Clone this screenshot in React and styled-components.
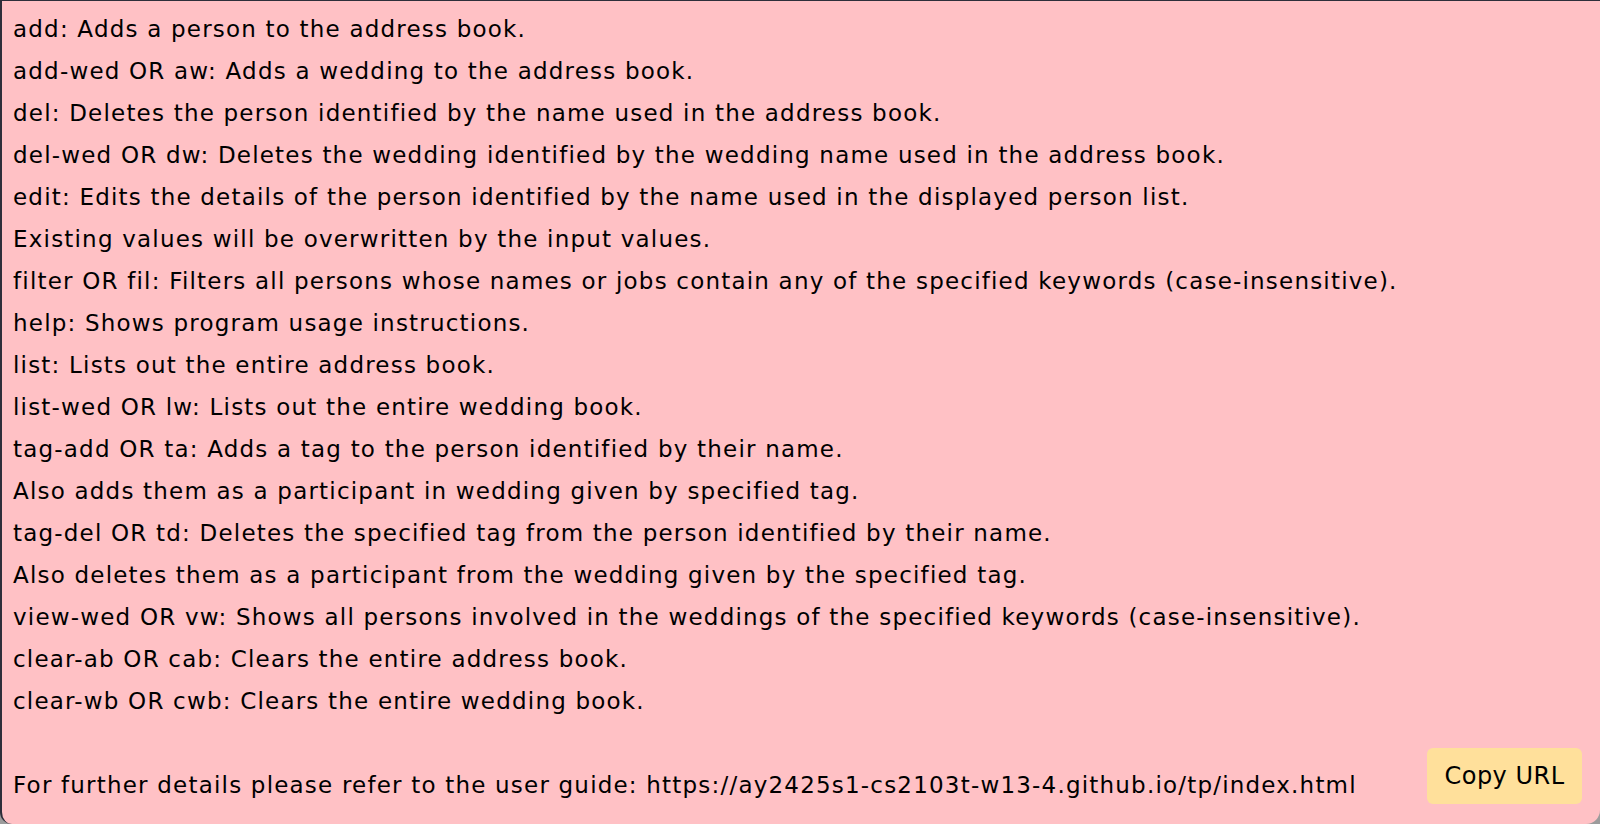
import React from 'react'
import styled, { createGlobalStyle } from 'styled-components'

const GlobalStyle = createGlobalStyle`
  html, body {
    margin: 0;
    padding: 0;
    background: #9c9c9c;
  }
`

const lines = [
  'add: Adds a person to the address book.',
  'add-wed OR aw: Adds a wedding to the address book.',
  'del: Deletes the person identified by the name used in the address book.',
  'del-wed OR dw: Deletes the wedding identified by the wedding name used in the address book.',
  'edit: Edits the details of the person identified by the name used in the displayed person list.',
  'Existing values will be overwritten by the input values.',
  'filter OR fil: Filters all persons whose names or jobs contain any of the specified keywords (case-insensitive).',
  'help: Shows program usage instructions.',
  'list: Lists out the entire address book.',
  'list-wed OR lw: Lists out the entire wedding book.',
  'tag-add OR ta: Adds a tag to the person identified by their name.',
  'Also adds them as a participant in wedding given by specified tag.',
  'tag-del OR td: Deletes the specified tag from the person identified by their name.',
  'Also deletes them as a participant from the wedding given by the specified tag.',
  'view-wed OR vw: Shows all persons involved in the weddings of the specified keywords (case-insensitive).',
  'clear-ab OR cab: Clears the entire address book.',
  'clear-wb OR cwb: Clears the entire wedding book.',
]

const HelpWindow = () => {
  return (
    <>
      <GlobalStyle />
      <Window>
        <Message>
          {lines.map((l) => (
            <Line key={l}>{l}</Line>
          ))}
          <Line>&nbsp;</Line>
        </Message>
        <Footer>
          <Line>For further details please refer to the user guide: https://ay2425s1-cs2103t-w13-4.github.io/tp/index.html</Line>
          <CopyButton>Copy URL</CopyButton>
        </Footer>
      </Window>
    </>
  )
}

export default HelpWindow

const Window = styled.div`
  box-sizing: border-box;
  width: 1600px;
  height: 824px;
  background: #ffc1c5;
  border-top: 1px solid #2e2e3a;
  border-left: 2px solid #2e2e3a;
  border-bottom-left-radius: 12px;
  border-bottom-right-radius: 14px;
  padding: 7px 18px 19px 11px;
  display: flex;
  flex-direction: column;
  font-family: "DejaVu Sans", "Open Sans", sans-serif;
  color: #000;
`

const Message = styled.div`
  display: flex;
  flex-direction: column;
`

const Line = styled.div`
  font-size: 23px;
  line-height: 42px;
  letter-spacing: 1.2px;
  white-space: pre;
`

const Footer = styled.div`
  display: flex;
  justify-content: space-between;
  align-items: center;
`

const CopyButton = styled.button`
  width: 155px;
  height: 56px;
  margin-top: -18px;
  border: none;
  border-radius: 6px;
  background: #ffe09b;
  font-family: "DejaVu Sans", "Open Sans", sans-serif;
  font-size: 24px;
  letter-spacing: 0.5px;
  color: #000;
  padding: 0;
`
